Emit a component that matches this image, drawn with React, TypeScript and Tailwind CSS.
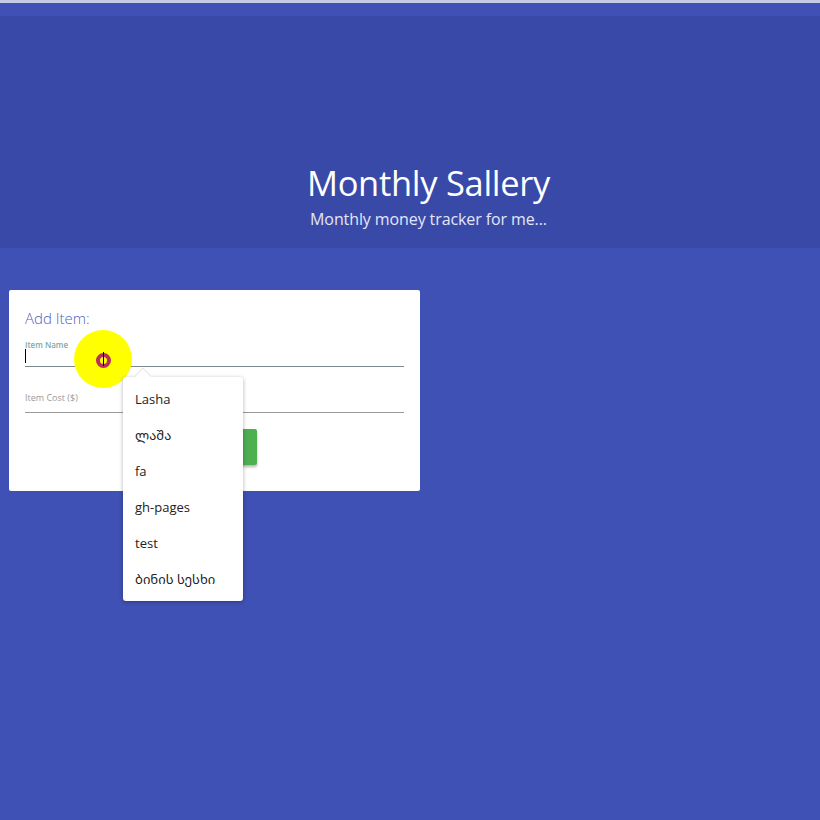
import React from "react";

const font = { fontFamily: '"Open Sans", "Noto Sans", "Noto Sans Georgian", "DejaVu Sans", sans-serif' };

export default function App() {
  const items = ["Lasha", "ლაშა", "fa", "gh-pages", "test", "ბინის სესხი"];
  return (
    <div className="w-[820px] h-[820px] bg-[#3f51b5] overflow-hidden relative" style={font}>
      <div className="h-[3px] bg-[#c5cae9]" />
      <div className="h-[13px] bg-[#3f51b5]" />
      <div className="h-[232px] bg-[#3949a8] flex flex-col items-center justify-end pb-[18px] pl-[37px]">
        <h1 className="text-[34.5px] leading-[42px] text-white font-normal tracking-[-0.3px] -mt-[1px]">Monthly Sallery</h1>
        <p className="text-[16px] leading-[22px] text-[#e3e6f5] mt-[4px] tracking-[-0.1px]">Monthly money tracker for me...</p>
      </div>
      <div className="pt-[42px] pl-[9px]">
        <div className="w-[411px] h-[201px] bg-white rounded-[2px] px-[16px] pt-[19px] flex flex-col">
          <div className="text-[15px] leading-[18px] text-[#5060bd] font-light">Add Item:</div>
          <div className="mt-[13px] relative h-[27px] border-b border-[#7a8a90] w-[379px]">
            <div className="text-[8px] leading-[10px] text-[#7fa9a6] font-semibold">Item Name</div>
            <div className="absolute left-0 top-[9px] w-[1px] h-[14px] bg-black" />
          </div>
          <div className="mt-[22px] h-[24px] pt-[3px] border-b border-[#9a9a9a] w-[379px]">
            <div className="text-[9px] leading-[12px] text-[#9a9a9a]">Item Cost ($)</div>
          </div>
          <div className="mt-[16px] flex pl-[136px]">
            <div className="w-[96px] h-[36px] bg-[#4caf50] rounded-[2px] shadow-[0_2px_3px_rgba(0,0,0,0.3)]" />
          </div>
        </div>
      </div>

      {/* yellow cursor highlight */}
      <div className="absolute left-[74px] top-[330px] w-[58px] h-[58px] rounded-full bg-[#ffff00] flex items-center justify-center">
        <div className="w-[15px] h-[15px] rounded-full border-[4px] border-[#b8305c] mt-[3px]" />
        <div className="absolute left-[29px] top-[22px] w-[1px] h-[14px] bg-black" />
      </div>

      {/* dropdown */}
      <div className="absolute left-[123px] top-[377px] w-[120px] h-[224px] bg-white rounded-[3px] shadow-[0_1px_4px_rgba(0,0,0,0.3)] pt-[11px]">
        <div className="absolute left-[14px] top-[-7px] w-[12px] h-[12px] bg-white rotate-45 border-l border-t border-[#e6e6e6]" />
        {items.map((it) => (
          <div key={it} className="h-[36px] pl-[12px] text-[13px] leading-[22px] text-[#222]">
            {it}
          </div>
        ))}
      </div>
    </div>
  );
}
